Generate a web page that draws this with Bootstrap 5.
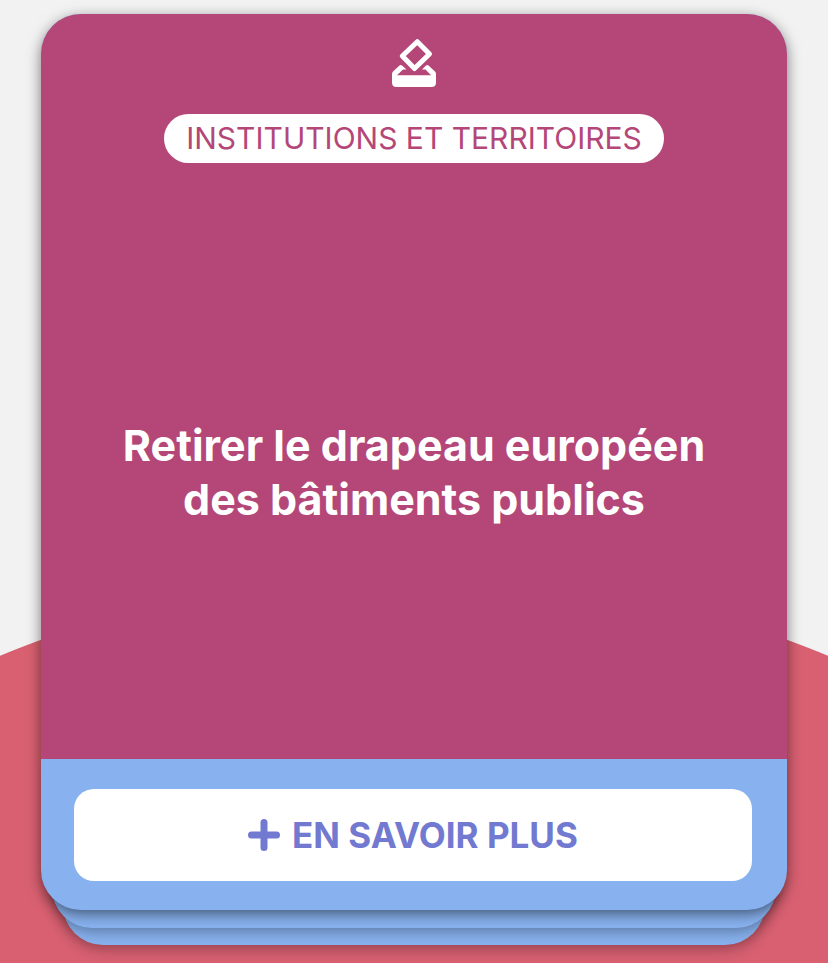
<!DOCTYPE html>
<html lang="fr">
<head>
<meta charset="utf-8">
<meta name="viewport" content="width=device-width, initial-scale=1">
<title>Institutions et territoires</title>
<link href="https://cdn.jsdelivr.net/npm/bootstrap@5.3.0/dist/css/bootstrap.min.css" rel="stylesheet">
<style>
body {
  font-family: Inter, "Liberation Sans", sans-serif;
  background: radial-gradient(circle at 50% 1656px, #d86071 1082px, #f2f2f2 1083px) no-repeat #d86071;
}
.page { padding: 14px 41px 53px; }
.deck { isolation: isolate; min-height: 896px; }
.sheet {
  border-radius: 40px;
  background: #88b2ef;
  box-shadow: 0 4px 14px rgba(0, 0, 0, .5);
}
.under { height: 200px; box-shadow: 0 4px 14px rgba(0, 0, 0, .3); }
.under-1 { left: 11px; right: 11px; bottom: -18px; z-index: -1; }
.under-2 { left: 22px; right: 22px; bottom: -35px; z-index: -2; }
.topic { background: #b44777; padding: 24px 40px 0; }
.topic-icon { width: 44px; height: 50px; }
.topic-label {
  margin-top: 26px;
  padding: 0 22px;
  border-radius: 25px;
  color: #b44777;
  font-size: 30px;
  line-height: 49px;
}
.proposal { font-size: 43px; line-height: 54px; padding-top: 21px; }
.foot { padding: 30px 35px 29px 33px; }
.more {
  height: 92px;
  border-radius: 20px;
  color: #7279d0;
  font-size: 35px;
  gap: 12px;
}
.more:hover { background: #f7f7ff; color: #7279d0; }
</style>
<script src="https://cdn.jsdelivr.net/npm/bootstrap@5.3.0/dist/js/bootstrap.bundle.min.js" defer></script>
</head>
<body class="min-vh-100">
<main class="page">
  <div class="deck position-relative d-flex">
    <div class="sheet under under-2 position-absolute"></div>
    <div class="sheet under under-1 position-absolute"></div>
    <article class="sheet flex-fill d-flex flex-column overflow-hidden">
      <div class="topic flex-fill d-flex flex-column align-items-center text-center">
        <svg class="topic-icon" viewBox="0 0 44 50" aria-hidden="true">
          <path d="M25.300 3.700 37.500 16 22.500 30.500 10.300 18Z" fill="none" stroke="#fff" stroke-width="5" stroke-linejoin="round"/>
          <path d="M7.500 27.500Q8.500 26.500 10 27.500L14.500 31.500H11L5 37.200H39L33.500 31.500H30L34 27.500Q35.500 26.500 36.500 27.500L43 33.500Q44 34.500 44 36V44.500Q44 49 39.500 49H4.500Q0 49 0 44.500V36Q0 34.500 1 33.500Z" fill="#fff"/>
        </svg>
        <div class="topic-label bg-white text-nowrap">INSTITUTIONS ET TERRITOIRES</div>
        <div class="flex-fill d-flex align-items-center">
          <h1 class="proposal fw-bold text-white mb-0">Retirer le drapeau européen<br>des bâtiments publics</h1>
        </div>
      </div>
      <div class="foot">
        <button type="button" class="more btn bg-white border-0 w-100 d-flex align-items-center justify-content-center fw-bold text-nowrap">
          <svg width="32" height="32" viewBox="0 0 32 32" aria-hidden="true"><path d="M16 3.500V28.500M3.500 16H28.500" stroke="currentColor" stroke-width="7" stroke-linecap="round"/></svg>
          <span>EN SAVOIR PLUS</span>
        </button>
      </div>
    </article>
  </div>
</main>
</body>
</html>
